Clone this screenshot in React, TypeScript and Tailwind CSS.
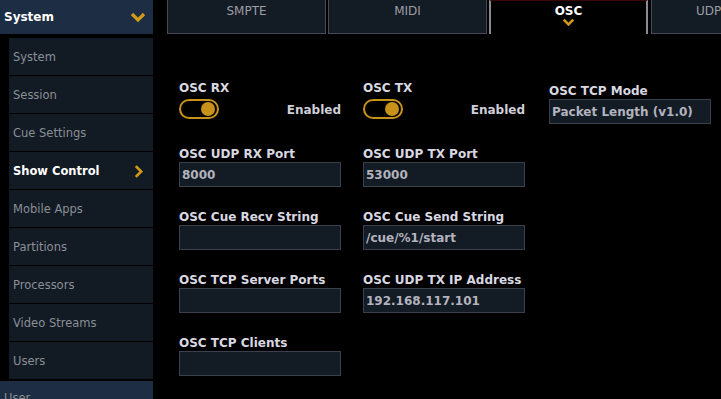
import React from "react"

const font = { fontFamily: '"DejaVu Sans", Verdana, sans-serif' }

const navItems = [
  "System",
  "Session",
  "Cue Settings",
  "Show Control",
  "Mobile Apps",
  "Partitions",
  "Processors",
  "Video Streams",
  "Users",
]

function ChevronDown({ className }: { className?: string }) {
  return (
    <svg viewBox="0 0 16 10" className={className}>
      <path d="M2 2 L8 8 L14 2" fill="none" stroke="#d19a16" strokeWidth="3.2" strokeLinejoin="miter" />
    </svg>
  )
}

function ChevronRight({ className }: { className?: string }) {
  return (
    <svg viewBox="0 0 10 16" className={className}>
      <path d="M2 2 L8 8 L2 14" fill="none" stroke="#d19a16" strokeWidth="3" />
    </svg>
  )
}

function Toggle() {
  return (
    <div className="w-[40px] h-[20px] rounded-full border-2 border-[#c8921a] bg-black flex items-center justify-end pr-[2px]">
      <div className="w-[14px] h-[14px] rounded-full bg-[#c8921a]" />
    </div>
  )
}

function Field({ label, value }: { label: string; value?: string }) {
  return (
    <div className="flex flex-col w-[162px]">
      <div className="h-[15px] leading-[15px] text-[12px] font-bold text-[#d9d8e2] whitespace-nowrap">{label}</div>
      <div className="h-[25px] border border-[#3b414c] bg-[#131b25] flex items-center px-[2px] text-[12px] font-bold text-[#b3b3bd] whitespace-nowrap">
        {value}
      </div>
    </div>
  )
}

function ToggleField({ label }: { label: string }) {
  return (
    <div className="flex flex-col w-[162px]">
      <div className="h-[15px] leading-[15px] text-[12px] font-bold text-[#d9d8e2]">{label}</div>
      <div className="mt-[3px] flex items-center justify-between">
        <Toggle />
        <span className="text-[12px] font-bold text-[#cfced8] pt-[2px]">Enabled</span>
      </div>
    </div>
  )
}

export default function App() {
  return (
    <div className="w-[721px] h-[399px] bg-black flex overflow-hidden" style={font}>
      <aside className="w-[153px] flex flex-col shrink-0 overflow-hidden">
        <div className="h-[34px] shrink-0 bg-[#1c2d44] flex items-center justify-between pl-[4px] pr-[7px]">
          <span className="text-[12px] font-bold text-white">System</span>
          <ChevronDown className="w-[16px] h-[10px]" />
        </div>
        <div className="flex flex-col shrink-0 gap-[1px] pt-[4px] pl-[9px]">
          {navItems.map((item) => {
            const active = item === "Show Control"
            return (
              <div key={item} className="h-[37px] shrink-0 bg-[#121a24] flex items-center justify-between pl-[4px] pr-[10px] pt-[2px]">
                <span
                  className={
                    active
                      ? "text-[11.5px] font-bold text-white"
                      : "text-[11.5px] text-[#8b8f96]"
                  }
                >
                  {item}
                </span>
                {active && <ChevronRight className="w-[9px] h-[15px]" />}
              </div>
            )
          })}
        </div>
        <div className="mt-[2px] h-[30px] shrink-0 bg-[#1c2d44] pl-[4px] pt-[10px] text-[11.5px] text-[#8b8f96] leading-[14px]">
          User
        </div>
      </aside>

      <main className="flex-1 flex flex-col overflow-hidden">
        <div className="flex shrink-0 gap-[2px] pl-[14px] h-[34px]">
          <div className="w-[159px] shrink-0 border border-t-0 border-[#474b55] bg-[#131b25] flex justify-center pt-[2px] text-[12px] text-[#9c9ea6]">
            SMPTE
          </div>
          <div className="w-[159px] shrink-0 border border-t-0 border-[#474b55] bg-[#131b25] flex justify-center pt-[2px] text-[12px] text-[#9c9ea6]">
            MIDI
          </div>
          <div className="w-[159px] shrink-0 border-l-2 border-r-2 border-t border-[#8a8a90] border-t-[#3a0606] bg-black flex flex-col items-center pt-[2px]">
            <span className="text-[12px] font-bold text-white leading-[16px]">OSC</span>
            <ChevronDown className="w-[13px] h-[8px] -mt-[1px]" />
          </div>
          <div className="w-[100px] shrink-0 ml-[1px] border border-t-0 border-r-0 border-[#474b55] bg-[#131b25] flex pl-[44px] pt-[2px] text-[12px] text-[#9c9ea6]">
            UDP
          </div>
        </div>

        <div className="flex flex-col pl-[26px] pt-[47px] gap-[23px]">
          <div className="flex gap-[22px]">
            <ToggleField label="OSC RX" />
            <ToggleField label="OSC TX" />
            <div className="mt-[3px] ml-[2px]">
              <Field label="OSC TCP Mode" value="Packet Length (v1.0)" />
            </div>
          </div>
          <div className="flex gap-[22px]">
            <Field label="OSC UDP RX Port" value="8000" />
            <Field label="OSC UDP TX Port" value="53000" />
          </div>
          <div className="flex gap-[22px]">
            <Field label="OSC Cue Recv String" />
            <Field label="OSC Cue Send String" value="/cue/%1/start" />
          </div>
          <div className="flex gap-[22px]">
            <Field label="OSC TCP Server Ports" />
            <Field label="OSC UDP TX IP Address" value="192.168.117.101" />
          </div>
          <div className="flex gap-[22px]">
            <Field label="OSC TCP Clients" />
          </div>
        </div>
      </main>
    </div>
  )
}
